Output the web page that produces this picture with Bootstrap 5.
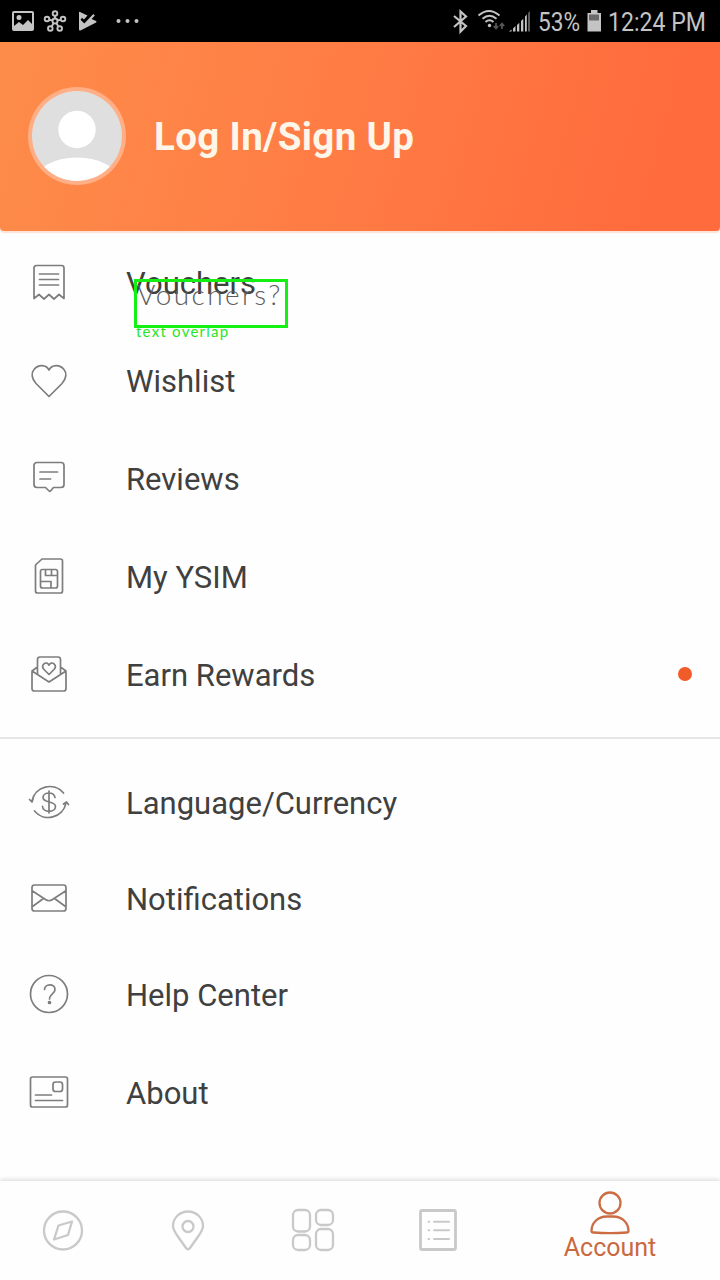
<!DOCTYPE html>
<html lang="en">
<head>
<meta charset="utf-8">
<meta name="viewport" content="width=device-width, initial-scale=1">
<title>Account</title>
<link href="https://cdn.jsdelivr.net/npm/bootstrap@5.3.0/dist/css/bootstrap.min.css" rel="stylesheet">
<style>
body{font-family:Roboto,"Noto Sans",sans-serif;background:#fefefe;color:#404040}
.screen{width:720px;height:1280px;overflow:hidden}
.status{height:42px;background:#000}
.status svg,.tabs svg,.menu-row svg,.profile svg{display:block;flex:none}
.profile{height:189px;background:linear-gradient(105deg,#fd8c49 0%,#ff7f46 40%,#ff6b3d 90%);border-radius:0 0 4px 4px;box-shadow:0 2px 1px #fbe3d8;padding:0 0 2px 28px;gap:28px;margin-bottom:2px}
.profile-title{font-size:38.500px;font-weight:700;line-height:1;color:#fff6ea;letter-spacing:.35px;white-space:nowrap;padding-top:4px}
.menu-row{height:98px;padding-left:25px;gap:53px;font-size:31px;line-height:36px}
.menu-row span{padding-top:4px}
.menu-row svg{fill:none;stroke:#7d7d7d;stroke-width:1.7;stroke-linecap:round;stroke-linejoin:round}
.second{padding-top:15px}
.second .menu-row{height:96px}
.second .menu-row:last-child{height:99px}
.rule{height:2px;background:#e6e6e6;margin-top:14px}
.dot{width:14px;height:14px;border-radius:50%;background:#f15a29;margin-right:28px}
.marker{left:134px;top:46px;width:154px;height:49px;border:3px solid #14f014}
.ghost{left:137px;top:43px;font:300 28px/36px Lato,sans-serif;color:#5c5c5c;letter-spacing:2.400px;white-space:nowrap}
.tag{left:136px;top:87px;font:400 15px/22px Lato,sans-serif;color:#2be52b;letter-spacing:1.250px;white-space:nowrap}
.tabs{height:99px;box-shadow:0 -1px 5px rgba(0,0,0,.16);background:#fefefe;padding:0 0 2px 1px}
.tabs svg{fill:none;stroke:#c9c9c9;stroke-width:2.3;stroke-linejoin:round;stroke-linecap:round}
.tab-item{width:124.8px}
.tabs .active-tab{color:#c9693f;font-size:25px;line-height:26px;width:220px;padding-bottom:9px}
.tabs .active-tab svg{stroke:#cb6c43}
</style>
</head>
<body>
<div class="screen d-flex flex-column position-relative">
  <header class="status d-flex justify-content-between">
    <svg width="150" height="42" viewBox="0 0 150 42" fill="#c4c4c4">
      <path fill-rule="evenodd" d="M14 11h18a2 2 0 0 1 2 2v16a2 2 0 0 1-2 2H14a2 2 0 0 1-2-2V13a2 2 0 0 1 2-2zm0 2v13l5-4 4 3 5-5 4 4V13zM19 15a2.500 2.500 0 1 1 0 5a2.500 2.500 0 0 1 0-5z"/>
      <g fill="none" stroke="#c4c4c4" stroke-width="1.9"><circle cx="55" cy="21" r="2.500"/><circle cx="55" cy="13.500" r="2.300"/><circle cx="47" cy="19" r="2.300"/><circle cx="63" cy="19" r="2.300"/><circle cx="50.300" cy="28.500" r="2.300"/><circle cx="59.700" cy="28.500" r="2.300"/><path d="M55 16v2.500M49.300 19.700l3.200.8M60.700 19.700l-3.200.8M51.800 26.200l1.700-3M58.200 26.200l-1.700-3"/></g>
      <path d="M79 12.500q0-1 1-.6l7.500 3.500-3.500 4-2-1.700-1.500 2 3.800 3.800 9-9.500 1.500 1.600-3.200 3.300 4.500 2.100q1 .8 0 1.500L80.500 30.500q-1.500.3-1.500-1z"/>
      <circle cx="118.500" cy="21" r="2"/><circle cx="127.500" cy="21" r="2"/><circle cx="136.500" cy="21" r="2"/>
    </svg>
    <svg width="280" height="42" viewBox="440 0 280 42" fill="#c4c4c4">
      <path d="M454 16l12 10-5.500 5.500v-20L466 16.500 454 27" fill="none" stroke="#c4c4c4" stroke-width="2.200"/>
      <g fill="none" stroke="#c4c4c4" stroke-width="2"><path d="M478.500 15.500q10.500-9 21 0"/><path d="M482.500 18.700q7-6 14 0"/><path d="M485.500 22q4-3.500 8 0"/></g>
      <circle cx="489.500" cy="25.500" r="1.700"/>
      <path d="M496 23v5M493.800 26l2.200 2.500 2.200-2.500M502 29v-5M499.800 26l2.200-2.500 2.200 2.500" fill="none" stroke="#555" stroke-width="1.800"/>
      <path d="M509 31.500l2.500-2v2zM513 28.500l2.500-2.500v5.500H513zM517 25l2.300-2.300v8.800H517zM521 21l2.300-2.300v12.800H521zM525 16.500l1.800-2v17H525z"/><path d="M528 13l2-2v20.500h-2z" fill="#5b5b5b"/>
      <text x="538" y="31" font-size="25.500" textLength="42" lengthAdjust="spacingAndGlyphs">53%</text>
      <path d="M587.500 13h3.500v-3h6.500v3h3.500v18.500h-13.500z"/><path d="M589 14.500h10v6h-10z" fill="#6a6a6a"/>
      <text x="608" y="31" font-size="25.500" textLength="98" lengthAdjust="spacingAndGlyphs">12:24 PM</text>
    </svg>
  </header>

  <section class="profile d-flex align-items-center flex-shrink-0">
    <svg width="98" height="98" viewBox="0 0 98 98">
      <defs><clipPath id="face"><circle cx="49" cy="49" r="45"/></clipPath></defs>
      <circle cx="49" cy="49" r="49" fill="#ffae85"/><circle cx="49" cy="49" r="45" fill="#dfdfdf"/>
      <g clip-path="url(#face)" fill="#fff"><circle cx="49" cy="42.500" r="18.700"/><ellipse cx="49" cy="94" rx="42" ry="23.500"/></g>
    </svg>
    <div class="profile-title">Log In/Sign Up</div>
  </section>

  <main class="flex-grow-1">
    <section class="position-relative">
      <div class="menu-row d-flex align-items-center">
        <svg width="48" height="48" viewBox="25 258 48 48"><path d="M34 298.500V268q0-2.500 2.500-2.500h25q2.500 0 2.500 2.500v30.500l-5-4-5 4.500-5-4.500-5 4.500-5-4.500zM39.500 274h19M39.500 279.500h19M39.500 285h19"/></svg>
        <span>Vouchers</span>
      </div>
      <div class="menu-row d-flex align-items-center">
        <svg width="48" height="48" viewBox="25 356 48 48"><path d="M49 396.500L36 383.500C31.500 378.500 31 373 34 369.500C38.500 364 46 364.500 49 370C52 364.500 59.500 364 64 369.500C67 373 66.500 378.500 62 383.500Z"/></svg>
        <span>Wishlist</span>
      </div>
      <div class="menu-row d-flex align-items-center">
        <svg width="48" height="48" viewBox="25 454 48 48"><path d="M37 462.500h24q3 0 3 3v19q0 3-3 3h-7.500L50.500 491q-.7.700-1.400 0L45.500 487.500H37q-3 0-3-3v-19q0-3 3-3zM40 472h17.500M40 479h10.500"/></svg>
        <span>Reviews</span>
      </div>
      <div class="menu-row d-flex align-items-center">
        <svg width="48" height="48" viewBox="25 552 48 48"><path d="M42 559h18.500q2 0 2 2v30q0 2-2 2h-23q-2 0-2-2v-26zM42.500 569.500h13q2 0 2 2v14.500q0 2-2 2h-13q-2 0-2-2v-14.500q0-2 2-2zM45.500 569.500v6h12M51.500 569.500v6M40.500 581.500h10.500v6"/></svg>
        <span>My YSIM</span>
      </div>
      <div class="menu-row d-flex align-items-center">
        <svg width="48" height="48" viewBox="25 650 48 48"><path d="M37.500 674v-14.500q0-2.500 2.500-2.500h18q2.500 0 2.500 2.500V674M37.500 667l-5.500 4v17.500q0 2.500 2.500 2.500h29q2.500 0 2.500-2.500V671l-5.500-4M32 671l17 11 17-11M49 674.500l-5-5c-2-2.500-1.500-4.500 0-5.700 2-1.500 4-.8 5 1.400 1-2.200 3-2.900 5-1.400 1.500 1.200 2 3.200 0 5.700z"/></svg>
        <span class="flex-grow-1">Earn Rewards</span><i class="dot"></i>
      </div>
      <div class="ghost position-absolute">Vouchers?</div>
      <div class="tag position-absolute">text overlap</div>
      <div class="marker position-absolute"></div>
    </section>
    <div class="rule"></div>
    <section class="second">
      <div class="menu-row d-flex align-items-center">
        <svg width="48" height="48" viewBox="25 778 48 48"><path d="M63.500 793A18 18 0 0 0 32 801M29.500 799.500l2.500 2.500 1-3M34.500 811A18 18 0 0 0 66 803M63.500 804l3-2 2 2.500M55 797.500c-.5-3-3-4.500-6-4.500s-6 1.700-6 4.500c0 6 12.500 3 12.500 9 0 3-3 4.800-6.500 4.800s-6.500-2-6.500-5M49 791v22"/></svg>
        <span>Language/Currency</span>
      </div>
      <div class="menu-row d-flex align-items-center">
        <svg width="48" height="48" viewBox="25 874 48 48"><path d="M34.500 885h29q2.500 0 2.500 2.500v21q0 2.500-2.500 2.500h-29q-2.500 0-2.500-2.500v-21q0-2.500 2.500-2.500zM32.500 891l13 8.500q3.500 2.500 7 0l13-8.500M32.500 906.500l11-8M65.500 906.500l-11-8"/></svg>
        <span>Notifications</span>
      </div>
      <div class="menu-row d-flex align-items-center">
        <svg width="48" height="48" viewBox="25 970 48 48"><circle cx="49" cy="994" r="18.500"/><path d="M44.500 989.500c0-6 10.500-6.500 10.500 0 0 4.500-5.500 4.500-5.500 9.500"/><circle cx="49.500" cy="1002.500" r="1" fill="#7d7d7d"/></svg>
        <span>Help Center</span>
      </div>
      <div class="menu-row d-flex align-items-center">
        <svg width="48" height="48" viewBox="25 1068 48 48"><rect x="30.500" y="1077" width="37" height="30" rx="2"/><rect x="53" y="1082" width="9.500" height="9.500" rx="2.500"/><path d="M35.500 1095h16M35.500 1100.500h27"/></svg>
        <span>About</span>
      </div>
    </section>
  </main>

  <nav class="tabs d-flex align-items-center flex-shrink-0">
    <div class="tab-item d-flex justify-content-center"><svg width="46" height="46" viewBox="40.500 1207 46 46"><circle cx="63.500" cy="1230.500" r="19"/><path d="M72.500 1221.500l-4 13.500-14 4.500 4.500-14z"/></svg></div>
    <div class="tab-item d-flex justify-content-center"><svg width="46" height="46" viewBox="165 1207 46 46"><path d="M186 1248q2 2.500 4 0l9.500-13.500c2.500-4 3.500-6 3.500-8.500a15 14.500 0 0 0-30 0c0 2.500 1 4.500 3.500 8.500z"/><circle cx="188" cy="1226.500" r="5.500"/></svg></div>
    <div class="tab-item d-flex justify-content-center"><svg width="46" height="46" viewBox="290 1207 46 46"><rect x="293" y="1210" width="17" height="21.500" rx="5"/><rect x="316" y="1210" width="17" height="15" rx="5"/><rect x="293" y="1235" width="17" height="15" rx="5"/><rect x="316" y="1229" width="17" height="21" rx="5"/></svg></div>
    <div class="tab-item d-flex justify-content-center"><svg width="46" height="46" viewBox="415 1207 46 46"><rect x="420.500" y="1210.500" width="35" height="39" rx="1.500" stroke-width="2.800"/><path d="M434 1221.700h15M434 1230.300h15M434 1239h15M428.500 1221.700h.7M428.500 1230.300h.7M428.500 1239h.7" stroke-width="2"/></svg></div>
    <div class="active-tab d-flex flex-column align-items-center"><svg width="46" height="46" viewBox="587 1189 46 46"><circle cx="610" cy="1203" r="10.500"/><path d="M607 1216.500h6c10 0 15.500 7 15.500 14.500q0 1.500-2 1.500-16.500 1.200-33 0-2 0-2-1.500c0-7.500 5.500-14.500 15.500-14.500z"/></svg><span>Account</span></div>
  </nav>
</div>
<script src="https://cdn.jsdelivr.net/npm/bootstrap@5.3.0/dist/js/bootstrap.bundle.min.js"></script>
</body>
</html>
